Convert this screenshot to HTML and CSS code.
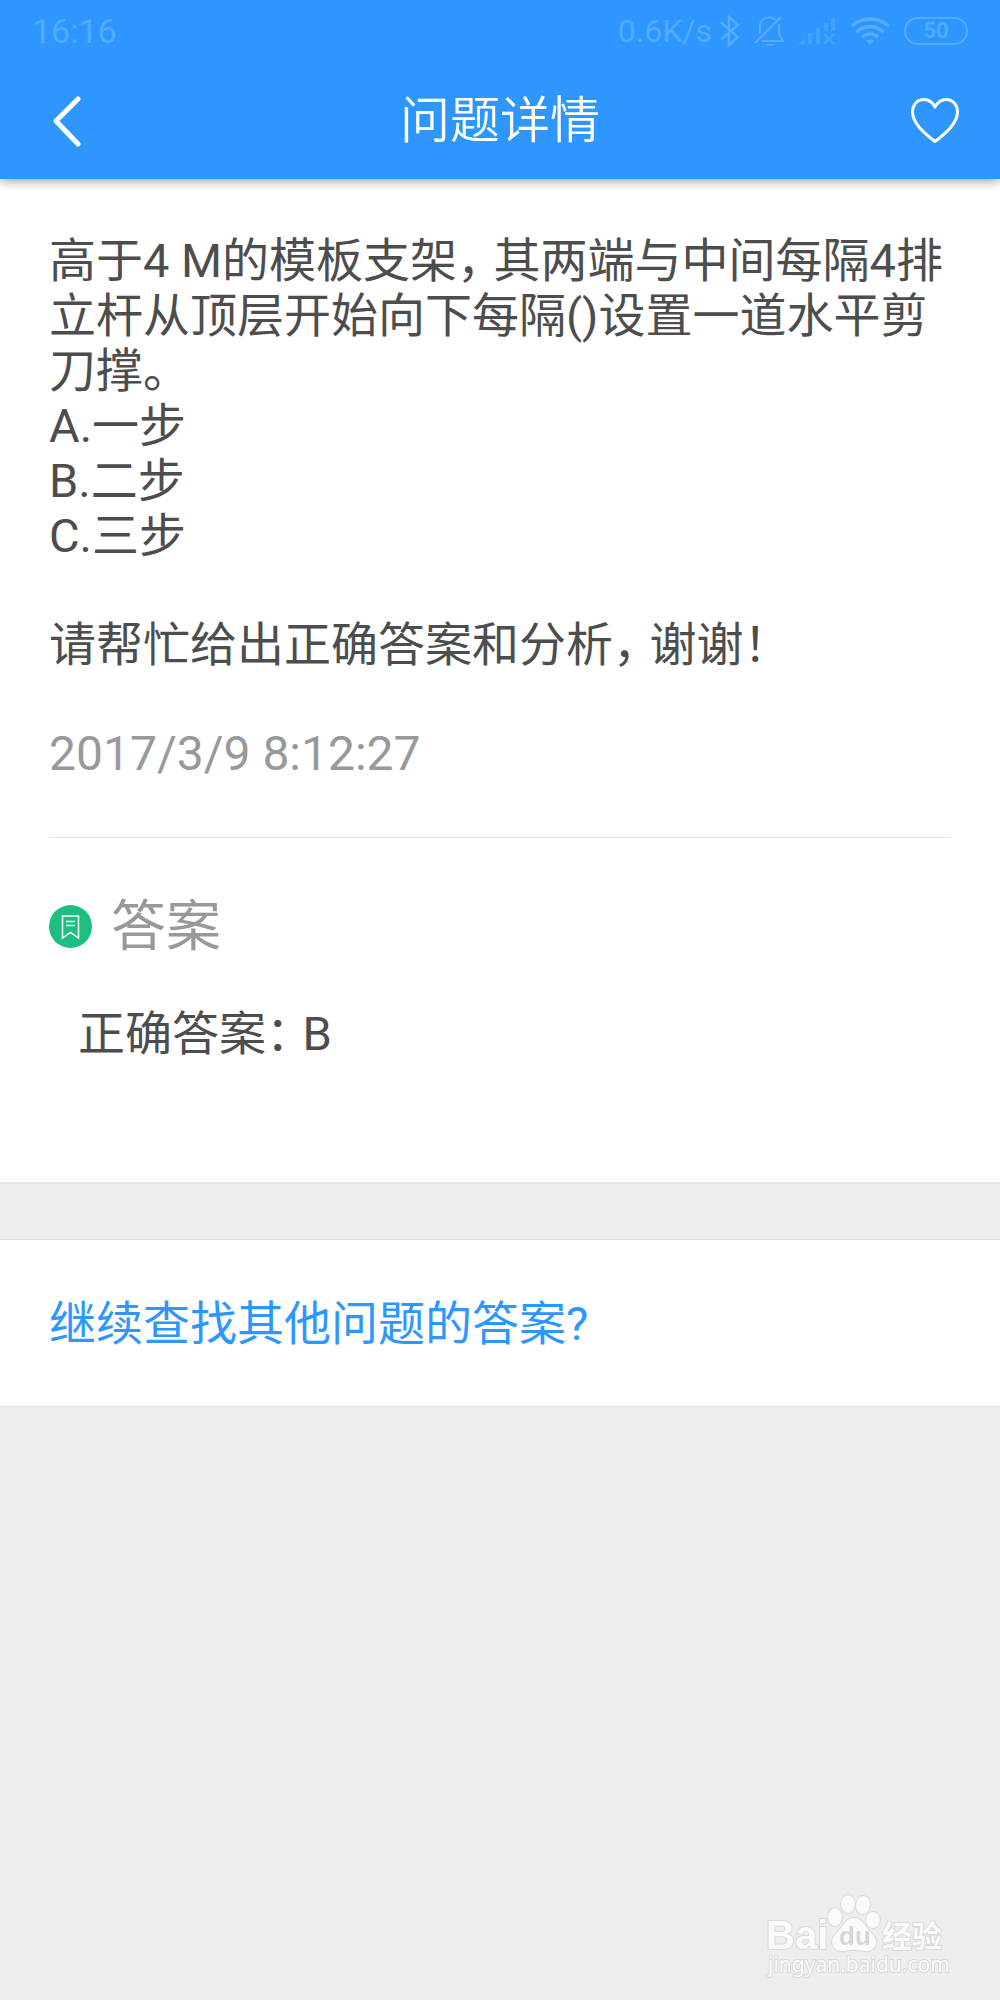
FILE: index.html
```html
<!DOCTYPE html>
<html lang="zh-CN">
<head>
  <meta charset="UTF-8" />
  <meta name="viewport" content="width=device-width, initial-scale=1.0"/>
  <title>问题详情</title>
  <link rel="stylesheet" href="styles.css">
</head>
<body>
  <header>
    <div class="status-bar">
      <span class="clock">16:16</span>
      <div class="status-icons">
        <span class="speed">0.6K/s</span>
        <!-- Bluetooth -->
        <svg class="bluetooth" width="20" height="32" viewBox="0 0 20 32" fill="none" stroke="currentColor" stroke-width="2.4">
          <path d="M1 7.500L18 22L9 30V2L18 10L1 24.500"/>
        </svg>
        <!-- Muted bell -->
        <svg class="bell" width="30" height="32" viewBox="0 0 30 32" fill="none" stroke="currentColor" stroke-width="2.200">
          <path d="M1 28L27 2M6 19V12C6 6 10 2.500 15.500 2.500C18 2.500 20 3 22 5M25 9V19L28.500 26H8"/>
          <path d="M11 29H21C19 31.500 13 31.500 11 29Z" fill="currentColor" stroke="none"/>
        </svg>
        <!-- No signal -->
        <svg class="signal" width="40" height="28" viewBox="0 0 40 28" fill="currentColor">
          <path d="M1 27L8 21V27ZM11 16H15V27H11ZM19 11H23V27H19ZM27 6H31V14H27ZM34 1H38V14H34Z"/>
          <path d="M27 17L37 27M37 17L27 27" stroke="currentColor" stroke-width="3"/>
        </svg>
        <!-- Wifi -->
        <svg class="wifi" width="40" height="30" viewBox="0 0 40 30" fill="none" stroke="currentColor" stroke-width="3.500">
          <path d="M1.500 10C12 .5 28 .5 38.500 10M6.500 16C14 9 26 9 33.500 16M12 21C17 17 23 17 28 21"/>
          <path d="M16 25C18 23 22 23 24 25L20 29Z" fill="currentColor" stroke="none"/>
        </svg>
        <span class="battery">50</span>
      </div>
    </div>
    <nav class="nav-bar">
      <button class="icon-button back" type="button" aria-label="返回">
        <svg width="30" height="52" viewBox="0 0 30 52" fill="none" stroke="currentColor" stroke-width="5" stroke-linecap="round" stroke-linejoin="round">
          <path d="M26 4L4 26L26 49"/>
        </svg>
      </button>
      <h1>问题详情</h1>
      <button class="icon-button favorite" type="button" aria-label="收藏">
        <svg width="50" height="47" viewBox="0 0 50 47" fill="none" stroke="currentColor" stroke-width="3" stroke-linejoin="round">
          <path d="M25 10C22 4.500 18.500 2.500 14 2.500C7 2.500 2.500 8 2.500 15C2.500 26 14 36 25 44.500C36 36 47.500 26 47.500 15C47.500 8 43 2.500 36 2.500C31.500 2.500 28 4.500 25 10Z"/>
        </svg>
      </button>
    </nav>
  </header>

  <main>
    <section class="panel">
      <div class="question">
        <p>高于4 M的模板支架<span class="punct">，</span>其两端与中间每隔4排<br>立杆从顶层开始向下每隔()设置一道水平剪<br>刀撑。<br>A.一步<br>B.二步<br>C.三步</p>
        <p>请帮忙给出正确答案和分析<span class="punct">，</span>谢谢！</p>
        <time datetime="2017-03-09T08:12:27">2017/3/9 8:12:27</time>
      </div>
      <div class="answer">
        <h2>
          <svg width="43" height="43" viewBox="0 0 43 43" fill="none" stroke="#fff" stroke-width="1.500">
            <circle cx="21.500" cy="21.500" r="21.500" fill="#1dbf80" stroke="none"/>
            <path d="M13.500 11H29.500V33L21.500 27.500L13.500 33ZM17 16.500H26M17 20.500H26"/>
          </svg>
          答案
        </h2>
        <p>正确答案<span class="punct">：</span>B</p>
      </div>
    </section>

    <section class="more">
      <a href="#">继续查找其他问题的答案?</a>
    </section>
  </main>

  <!-- Watermark -->
  <svg class="watermark" width="184" height="90" viewBox="0 0 184 90">
    <g class="mark">
      <text class="brand" x="1" y="58">Bai</text>
      <ellipse cx="70" cy="26" rx="7" ry="9"/>
      <ellipse cx="83" cy="13" rx="7" ry="9"/>
      <ellipse cx="98" cy="14" rx="7" ry="9" transform="rotate(10 98 14)"/>
      <ellipse cx="108" cy="29" rx="7" ry="8"/>
      <path d="M89 27C95 27 98 31 102 37C106 42 111 45 111 51C111 57 106 61 99 60C92 59 86 58 80 60C73 61 67 57 67 51C67 45 72 42 76 37C80 31 83 27 89 27Z"/>
      <text class="du" x="74" y="54">du</text>
      <text class="jingyan" x="117" y="56">经验</text>
      <text class="site" x="3" y="81">jingyan.baidu.com</text>
    </g>
  </svg>
</body>
</html>
```
FILE: styles.css
```css
* {
  box-sizing: border-box;
}
body {
  font-family: Roboto, 'Noto Sans CJK SC', sans-serif;
  margin: 0;
  min-height: 100vh;
  background-color: #eee;
  color: #4d4d4d;
}
h1,
h2,
p {
  margin: 0;
  font-weight: 400;
}
header {
  position: relative;
  background-color: #2d97ff;
  color: white;
  box-shadow: 0 2px 10px rgba(0, 0, 0, 0.4);
}
.status-bar {
  display: flex;
  justify-content: space-between;
  align-items: center;
  height: 62px;
  padding: 0 32px;
  color: rgba(255, 255, 255, 0.2);
}
.clock {
  font-size: 34px;
}
.speed {
  font-size: 32px;
  margin-right: 8px;
}
.status-icons {
  display: flex;
  align-items: center;
}
.bluetooth {
  margin-right: 14px;
}
.bell {
  margin-right: 13px;
}
.signal {
  margin-right: 13px;
  opacity: 0.5;
}
.wifi {
  margin-right: 14px;
}
.battery {
  width: 64px;
  height: 28px;
  border: 2px solid;
  border-radius: 14px;
  font-size: 22px;
  font-weight: 700;
  line-height: 24px;
  text-align: center;
}
.nav-bar {
  display: grid;
  grid-template-columns: 1fr auto 1fr;
  align-items: center;
  height: 117px;
  padding: 0 40px;
}
.nav-bar h1 {
  font-size: 50px;
  font-weight: 350;
  line-height: 60px;
}
.icon-button {
  display: flex;
  justify-self: start;
  padding: 0;
  border: none;
  background: none;
  color: white;
  cursor: pointer;
}
.back {
  padding-left: 12px;
}
.favorite {
  justify-self: end;
}
.panel {
  background-color: #fff;
  border-bottom: 2px solid #e6e6e6;
  padding: 54px 49px 121px;
}
.question {
  border-bottom: 1px solid #e0e0e0;
  padding-bottom: 56px;
}
.question p {
  font-size: 47px;
  line-height: 55px;
  margin-bottom: 54px;
  white-space: nowrap;
}
.punct {
  font-feature-settings: 'halt';
  margin-right: 13px;
}
.question time {
  display: block;
  font-size: 48px;
  line-height: 55px;
  color: #999;
}
.answer h2 {
  display: flex;
  align-items: center;
  gap: 19px;
  margin-top: 54px;
  font-size: 55px;
  line-height: 68px;
  color: #999;
}
.answer p {
  margin-top: 46px;
  padding-left: 29px;
  font-size: 47px;
  line-height: 55px;
}
.more {
  margin-top: 55px;
  padding: 55px 49px 53px;
  background-color: #fff;
  border-top: 1px solid #e0e0e0;
  border-bottom: 1px solid #e0e0e0;
}
.more a {
  display: block;
  font-size: 47px;
  line-height: 58px;
  color: #2d97ff;
  text-decoration: none;
}
.watermark {
  position: fixed;
  right: 51px;
  bottom: 19px;
}
.mark {
  fill: #fafafa;
  stroke: #dadada;
  stroke-width: 2px;
  paint-order: stroke;
}
.brand {
  font: 700 40px 'Liberation Sans', sans-serif;
}
.du {
  font: 700 26px 'Liberation Sans', sans-serif;
  fill: #d6d6d6;
  stroke: none;
}
.jingyan {
  font: 700 30px 'Noto Sans CJK SC', sans-serif;
}
.site {
  font: 400 21px 'Noto Sans', sans-serif;
}
```
